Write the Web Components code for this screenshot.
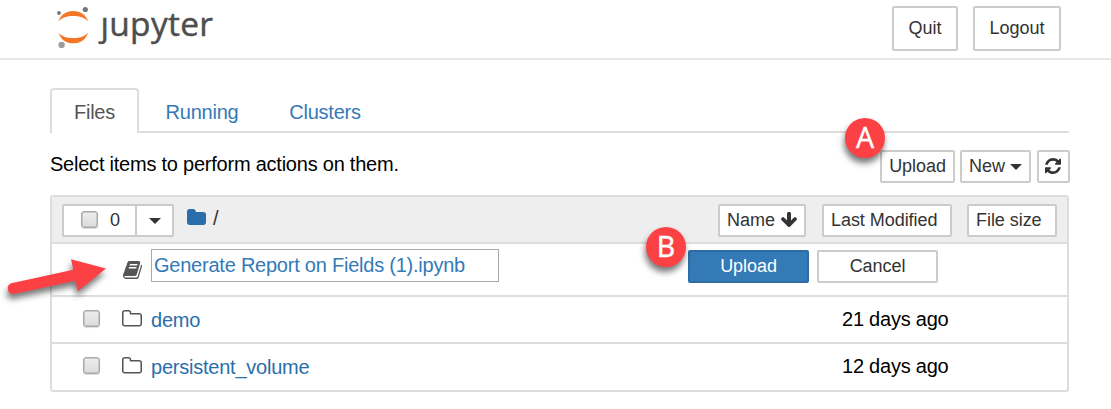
<!DOCTYPE html>
<html lang="en"><head><meta charset="utf-8"><title>Jupyter</title>
<style>
body{margin:0;background:#fff;font-family:"Liberation Sans",Arial,sans-serif;font-size:20px;letter-spacing:-.23px;color:#000;width:1111px;height:409px;overflow:hidden}
</style></head><body>
<notebook-page></notebook-page>
<script>
const define=(name,html)=>customElements.define(name,class extends HTMLElement{
  constructor(){super();const t=document.createElement('template');t.innerHTML=html;
    this.attachShadow({mode:'open'}).append(t.content.cloneNode(true));}
});
const icons={
  refresh:['0 128 1536 1536','M1511 1056q0 5-1 7-64 268-268 434.5t-478 166.5q-146 0-282.5-55t-243.5-157l-129 129q-19 19-45 19t-45-19-19-45v-448q0-26 19-45t45-19h448q26 0 45 19t19 45-19 45l-137 137q71 66 161 102t187 36q134 0 250-65t186-179q11-17 53-117 8-23 30-23h192q13 0 22.5 9.5t9.5 22.5zm25-800v448q0 26-19 45t-45 19h-448q-26 0-45-19t-19-45 19-45l138-138q-148-137-349-137-134 0-250 65t-186 179q-11 17-53 117-8 23-30 23h-199q-13 0-22.5-9.5t-9.5-22.5v-7q65-268 270-434.5t480-166.5q146 0 284 55.5t245 156.5l130-129q19-19 45-19t45 19 19 45z'],
  down:['53 128 1558 1483','M1611 832q0 54-37 91l-651 651q-39 37-91 37-51 0-90-37l-651-651q-38-36-38-91 0-53 38-91l74-75q39-37 91-37 53 0 90 37l294 294v-704q0-52 38-90t90-38h128q52 0 90 38t38 90v704l294-294q37-37 90-37 52 0 91 37l75 75q37 39 37 91z'],
  folder:['0 128 1664 1408','M1664 608v704q0 92-66 158t-158 66h-1216q-92 0-158-66t-66-158v-960q0-92 66-158t158-66h320q92 0 158 66t66 158v32h672q92 0 158 66t66 158z'],
  'folder-o':['0 128 1664 1408','M1536 1312v-704q0-40-28-68t-68-28h-704q-40 0-68-28t-28-68v-64q0-40-28-68t-68-28h-320q-40 0-68 28t-28 68v960q0 40 28 68t68 28h1216q40 0 68-28t28-68zm128-704v704q0 92-66 158t-158 66h-1216q-92 0-158-66t-66-158v-960q0-92 66-158t158-66h320q92 0 158 66t66 158v32h672q92 0 158 66t66 158z'],
  book:['0 128 1664 1536','M1639 478q40 57 18 129l-275 906q-19 64-76.5 107.5t-122.5 43.5h-923q-77 0-148.5-53.5t-99.5-131.5q-24-67-2-127 0-4 3-27t4-37q1-8-3-21.5t-3-19.5q2-11 8-21t16.5-23.5 16.5-23.5q23-38 45-91.5t30-91.5q3-10 .5-30t-.5-28q3-11 17-28t17-23q21-36 42-92t25-90q1-9-2.5-32t.5-28q4-13 22-30.5t22-22.5q19-26 42.5-84.5t27.5-96.5q1-8-3-25.5t-2-26.5q2-8 9-18t18-23 17-21q8-12 16.5-30.5t15-35 16-36 19.5-32 26.5-23.5 36-11.5 47.5 5.5l-1 3q38-9 51-9h761q74 0 114 56t18 130l-274 906q-36 119-71.5 153.5t-128.5 34.5h-869q-27 0-38 15-11 16-1 43 24 70 144 70h923q29 0 56-15.5t35-41.5l300-987q7-22 5-57 38 15 59 43zm-1064 2q-4 13 2 22.5t20 9.5h608q13 0 25.5-9.5t16.5-22.5l21-64q4-13-2-22.5t-20-9.5h-608q-13 0-25.5 9.5t-16.5 22.5zm-83 256q-4 13 2 22.5t20 9.5h608q13 0 25.5-9.5t16.5-22.5l21-64q4-13-2-22.5t-20-9.5h-608q-13 0-25.5 9.5t-16.5 22.5z'],
  caret:['0 0 12 6','M0 0h12l-6 6z']
};
customElements.define('nb-icon',class extends HTMLElement{
  constructor(){super();this.attachShadow({mode:'open'});}
  connectedCallback(){const [box,d]=icons[this.getAttribute('name')];
    this.shadowRoot.innerHTML=`<style>:host{display:block;flex:none}svg{display:block;width:100%;height:100%}</style><svg viewBox="${box}" preserveAspectRatio="none" fill="currentColor"><path d="${d}"/></svg>`;}
});
define('nb-button',`<style>
:host{display:flex;flex:none;box-sizing:border-box;height:33px;padding-bottom:2px;border:2px solid #ccc;border-radius:2px;background:#fff;color:#333;font-size:18px;letter-spacing:-.05px;line-height:20px;align-items:center;justify-content:center;white-space:pre}
:host([primary]){background:#337ab7;border-color:#2e6da4;color:#fff}
:host([start]){justify-content:flex-start;padding-left:7px}
</style><slot></slot>`);
define('nb-check',`<style>:host{display:block;flex:none;box-sizing:border-box;width:17px;height:17px;border:1px solid #a9a9a9;border-radius:3px;background:linear-gradient(#ededed,#dcdcdc);box-shadow:0 1px 1px #0002, inset 0 0 0 .5px #aaa}</style>`);
define('nb-logo',`<style>:host{display:flex;height:58px}svg{flex:none;width:32px;height:42px;margin:6px 0 0 57px}
.word{font:33.5px/44px "Open Sans","Noto Sans",sans-serif;letter-spacing:.3px;-webkit-text-stroke:.45px #4e4e4e;color:#4e4e4e;margin:1px 0 0 11.500px;white-space:nowrap}
.j{display:inline-block;clip-path:inset(15px -6px -4px -6px)}</style>
<svg viewBox="57 6 32 42"><g fill="#f37726"><path d="M58.3 21.500C61 14.500 66 11 73.200 11S85.700 14.500 88.300 21.500C84.500 17.500 79.500 16 73.200 16S62 17.500 58.300 21.500Z"/><path d="M58.3 32.400C62 36.600 67 38 73.200 38S84.500 36.600 88.300 32.400C85.700 39.700 80.500 43.200 73.200 43.200S61 39.700 58.300 32.400Z"/></g><circle cx="85.300" cy="9.500" r="2.600" fill="#767677"/><circle cx="59" cy="13" r="1.900" fill="#767677"/><circle cx="61.600" cy="45" r="3.200" fill="#9e9e9e"/></svg><div class="word"><span class="j">j</span>upyter</div>`);
define('nb-header',`<style>:host{display:flex;height:58px;border-bottom:2px solid #e7e7e7}
nb-logo{width:892px;flex:none}nb-button{height:45px;margin-top:6px}.quit{width:66px}.logout{width:88px;margin-left:15px}</style>
<nb-logo></nb-logo><nb-button class="quit">Quit</nb-button><nb-button class="logout">Logout</nb-button>`);
define('nb-tabs',`<style>:host{display:flex;box-sizing:border-box;height:45px;margin:28px 42px 0 50px;color:#337ab7;line-height:24px;border-bottom:2px solid #ddd}
div{box-sizing:border-box;height:45px;padding-top:12px;text-align:center}
.on{width:89px;border:2px solid #ddd;border-bottom:0;border-radius:4px 4px 0 0;padding-top:10px;color:#555;background:#fff}
.run{width:126px}.cl{width:120px}</style><div class="on">Files</div><div class="run">Running</div><div class="cl">Clusters</div>`);
define('nb-toolbar',`<style>:host{display:flex;margin:17px 41px 0 50px;height:45px}
.hint{width:830px;line-height:28px;flex:none}.up{width:75px}.new{width:71px;margin-left:5px}.re{width:33px;margin-left:6px;padding-right:1px}
.caret{width:12px;height:6px;margin:2px 0 0 5px}.sync{width:16px;height:16px}</style>
<div class="hint">Select items to perform actions on them.</div><nb-button class="up">Upload</nb-button><nb-button class="new">New<nb-icon class="caret" name="caret"></nb-icon></nb-button><nb-button class="re"><nb-icon class="sync" name="refresh"></nb-icon></nb-button>`);
define('list-header',`<style>:host{display:flex;height:45px;box-sizing:content-box;background:#eee;border-bottom:2px solid #ddd;color:#333}
.sel{width:75px;margin:7px 0 0 10px;border-radius:2px 0 0 2px;padding-left:2px}.sel nb-check{margin-right:12px}.dd{width:39px;margin:7px 0 0 -2px}
.caret{width:12px;height:6px;margin-top:2px}.folder{width:19px;height:16px;margin:12px 7px 0 13px;color:#296eaa}
.slash{width:505px;line-height:43px;flex:none}
.name,.mod,.size{margin-top:7px}.name{width:88px}.mod{width:130px;margin-left:16px}.size{width:90px;margin-left:15px}.down{width:16px;height:15px;margin-left:6px}</style>
<nb-button class="sel"><nb-check></nb-check>0</nb-button><nb-button class="dd"><nb-icon class="caret" name="caret"></nb-icon></nb-button><nb-icon class="folder" name="folder"></nb-icon><div class="slash">/</div>
<nb-button class="name">Name<nb-icon class="down" name="down"></nb-icon></nb-button><nb-button start class="mod">Last Modified</nb-button><nb-button start class="size">File size</nb-button>`);
define('upload-row',`<style>:host{display:flex;height:51px;border-bottom:2px solid #ddd}
.book{width:19px;height:18px;margin:17px 9px 0 71px;color:#555}
.field{box-sizing:border-box;flex:none;width:348px;height:33px;margin:5px 189px 0 0;border:1px solid #a9a9a9;padding-left:2px;line-height:30px;color:#337ab7;white-space:nowrap}
nb-button{width:121px;margin:6px 8px 0 0}</style><nb-icon class="book" name="book"></nb-icon><div class="field">Generate Report on Fields (1).ipynb</div><nb-button primary>Upload</nb-button><nb-button>Cancel</nb-button>`);
define('folder-row',`<style>:host{display:flex;height:45px;border-bottom:2px solid #ddd}:host([last]){height:46px;border:0}
nb-check{margin:13px 0 0 31px}nb-icon{width:20px;height:16.500px;margin:13px 9px 0 22px;color:#555}
.name{width:691px;flex:none;color:#296eaa;line-height:46px}.time{line-height:44px;white-space:nowrap}</style>
<nb-check></nb-check><nb-icon name="folder-o"></nb-icon><div class="name"><slot></slot></div><div class="time"><slot name="time"></slot></div>`);
define('file-list',`<style>:host{display:block;box-sizing:border-box;width:1019px;height:197px;margin-left:50px;border:2px solid #ddd;border-radius:3px;overflow:hidden}</style>
<list-header></list-header><upload-row></upload-row><folder-row>demo<span slot="time">21 days ago</span></folder-row><folder-row last>persistent_volume<span slot="time">12 days ago</span></folder-row>`);
define('callout-badge',`<style>:host{position:absolute;width:40px;height:40px;border-radius:50%;background:#fc4145;color:#fff;box-shadow:-1px 5px 6px #0008;font:28.500px/38px "Noto Sans","Open Sans",sans-serif;-webkit-text-stroke:.3px #fff;text-align:center}</style><slot></slot>`);
define('callout-arrow',`<style>:host{position:absolute;left:0;top:245px;width:120px;height:65px;pointer-events:none}svg{display:block;overflow:visible;filter:drop-shadow(-1px 5px 3px #0008)}</style>
<svg width="120" height="65" viewBox="0 245 120 65"><path fill="#fc4145" d="M106 268.500 71 259.300 73.300 269.800 11.300 283.200A5.600 5.600 0 0 0 13.700 294L75.600 280.700 77.800 291.300Z"/></svg>`);
define('notebook-page',`<style>:host{display:block;position:relative;width:1111px;height:409px;overflow:hidden}.a{left:845px;top:118px}.b{left:646px;top:227px}</style>
<nb-header></nb-header><nb-tabs></nb-tabs><nb-toolbar></nb-toolbar><file-list></file-list><callout-badge class="a">A</callout-badge><callout-badge class="b">B</callout-badge><callout-arrow></callout-arrow>`);
</script></body></html>
